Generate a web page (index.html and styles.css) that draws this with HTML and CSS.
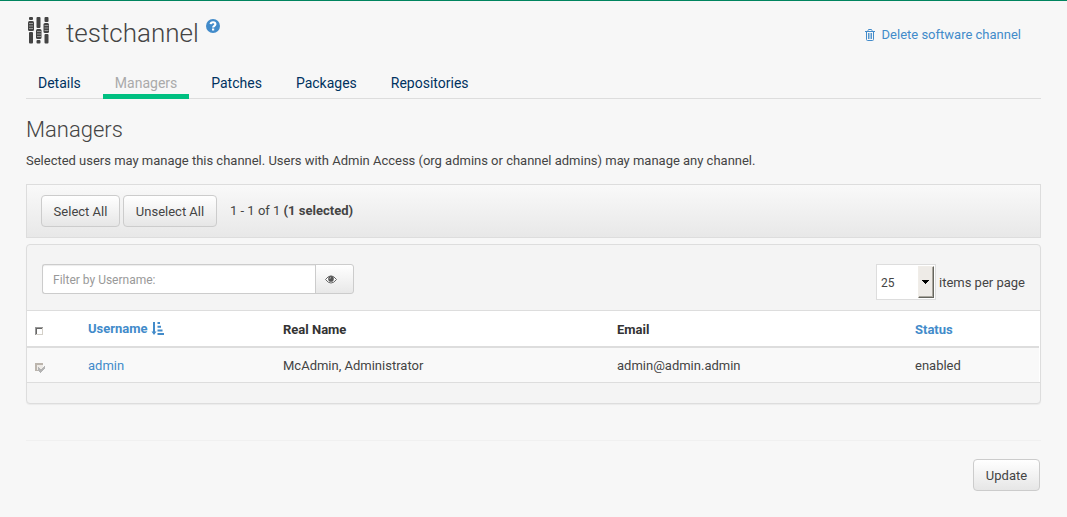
FILE: index.html
```html
<!DOCTYPE html>
<html lang="en">
<head>
<meta charset="utf-8">
<title>testchannel - Managers</title>
<link rel="stylesheet" href="styles.css">
</head>
<body>
<main class="page">
  <header class="page-header">
    <svg class="channel-icon" width="22" height="27" viewBox="0 0 22 27">
      <g fill="#444">
        <rect x="1" y="0" width="4" height="3" rx="1"/><rect x="0" y="4" width="6" height="10" rx="1.5"/><rect x="1" y="15" width="4" height="11.500" rx="1"/>
        <rect x="8.500" y="0" width="4" height="11" rx="1"/><rect x="8" y="12" width="5.500" height="10" rx="1.500"/><rect x="8.500" y="23" width="4" height="3.500" rx="1"/>
        <rect x="16.500" y="0" width="4" height="5" rx="1"/><rect x="15.500" y="6" width="5.500" height="10" rx="1.500"/><rect x="16.500" y="17" width="4" height="9.500" rx="1"/>
      </g>
      <path d="M1 6.500h4M1 9h4M1 11.500h4M9 14.500h4M9 17h4M9 19.500h4M16.500 8.500h4M16.500 11h4M16.500 13.500h4" stroke="#999" stroke-width="1"/>
    </svg>
    <h1 class="page-title">testchannel</h1>
    <svg class="help-icon" width="14" height="14" viewBox="0 0 14 14">
      <circle cx="7" cy="7" r="7" fill="#428bca"/>
      <path d="M4.600 5.200C4.800 2.600 9.400 2.600 9.400 5.200C9.400 6.900 7.100 6.700 7.100 8.600" fill="none" stroke="#fff" stroke-width="2.100"/>
      <rect x="6" y="9.500" width="2.200" height="2" fill="#fff"/>
    </svg>
    <a class="delete-link">
      <svg width="10" height="12" viewBox="0 0 10 12" fill="none" stroke="#428bca">
        <path d="M0 2.500h10M3 2.500V1.500L3.500.5h3L7 1.500v1M1.500 3v7.500q0 1 1 1h5q1 0 1-1V3"/>
        <path d="M3.500 4v6M5 4v6M6.500 4v6" stroke-width=".9"/>
      </svg>
      <span>Delete software channel</span>
    </a>
  </header>
  <nav class="tabs">
    <a class="tab">Details</a>
    <a class="tab active">Managers</a>
    <a class="tab">Patches</a>
    <a class="tab">Packages</a>
    <a class="tab">Repositories</a>
  </nav>
  <h2 class="section-title">Managers</h2>
  <p class="intro">Selected users may manage this channel. Users with Admin Access (org admins or channel admins) may manage any channel.</p>
  <div class="toolbar">
    <button class="btn select-all">Select All</button>
    <button class="btn unselect-all">Unselect All</button>
    <span class="count">1 - 1 of 1 <strong>(1 selected)</strong></span>
  </div>
  <section class="panel">
    <div class="panel-head">
      <div class="filter">
        <input class="filter-input" type="text" placeholder="Filter by Username:">
        <button class="filter-btn" aria-label="Filter">
          <svg width="12" height="9" viewBox="0 0 12 9">
            <path d="M.5 4.500Q6-2.800 11.500 4.500Q6 11.600.5 4.500Z" fill="#fff" stroke="#666"/>
            <circle cx="6" cy="3.900" r="2.800" fill="#555"/>
            <path d="M4.800 3.800q0-1.300 1.300-1.300" fill="none" stroke="#ddd" stroke-width=".7"/>
          </svg>
        </button>
      </div>
      <div class="page-size">
        <div class="select"><span class="select-value">25</span><span class="select-arrow"><svg width="7" height="4" viewBox="0 0 7 4" shape-rendering="crispEdges"><path d="M0 0h7v1H6v1H5v1H4v1H3V3H2V2H1V1H0z"/></svg></span></div>
        <span class="page-size-label">items per page</span>
      </div>
    </div>
    <table class="users">
      <colgroup><col class="col-check"><col class="col-user"><col class="col-name"><col class="col-email"><col class="col-status"></colgroup>
      <thead>
        <tr>
          <th><svg class="check" width="11" height="10" viewBox="0 0 11 10" shape-rendering="crispEdges"><rect width="8" height="8" fill="#d4d0c8"/><path d="M0 0h8v1H1v7H0z" fill="#999"/><path d="M1 1h6v1H2v5H1z" fill="#666"/><rect x="2" y="2" width="5" height="5" fill="#fff"/></svg></th>
          <th><span class="sort">Username<svg width="13" height="13" viewBox="0 0 13 13" fill="#428bca"><path d="M2 0h2v9.500h1.500L3 13 .5 9.500H2z"/><path d="M6.500 0h2.500v2H6.500zM6.500 3.700h3.500v2H6.500zM6.500 7.400H11.500v2H6.500zM6.500 11h6.500v2H6.500z"/></svg></span></th>
          <th>Real Name</th>
          <th>Email</th>
          <th class="sortable">Status</th>
        </tr>
      </thead>
      <tbody>
        <tr>
          <td><svg class="check" width="11" height="10" viewBox="0 0 11 10" shape-rendering="crispEdges"><rect width="8" height="8" fill="#eeebe7"/><path d="M0 0h8v2H2v6H0z" fill="#bcb5ad"/><path d="M0 7h4v1H0z" fill="#bcb5ad"/><path d="M3 4h1v1h1v1h2V5h1V4h1V3h1v3H9v1H8v1H7v1H6v1H5V9H4V8H3z" fill="#b4b4b4"/></svg></td>
          <td><a class="link">admin</a></td>
          <td>McAdmin, Administrator</td>
          <td>admin@admin.admin</td>
          <td>enabled</td>
        </tr>
      </tbody>
    </table>
    <div class="panel-foot"></div>
  </section>
  <footer class="actions"><button class="btn update">Update</button></footer>
</main>
</body>
</html>
```

FILE: styles.css
```css
* { box-sizing: border-box; }
body {
  margin: 0;
  height: 517px;
  overflow: hidden;
  background: #f7f7f7;
  border-top: 1px solid #00855f;
  color: #444;
  font: 13px/18px Roboto, "Liberation Sans", sans-serif;
}
.page { padding: 0 26px; }
.page-header { display: flex; align-items: flex-start; height: 71px; }
.channel-icon { margin: 16px 0 0 2px; }
.page-title { margin: 14px 0 0 16px; width: 133px; font-size: 26px; line-height: 37px; font-weight: 300; white-space: nowrap; }
.help-icon { margin: 18px 0 0 7px; }
.delete-link { display: flex; align-items: center; gap: 7px; margin: 25px 20px 0 auto; color: #428bca; }
.tabs { display: flex; height: 27px; border-bottom: 1px solid #ddd; font-size: 14px; line-height: 20px; color: #00325f; }
.tab { height: 27px; padding: 1px 12px 0; margin-right: 10px; white-space: nowrap; }
.tab.active { width: 86px; margin-right: 10.4px; color: #aaa; border-bottom: 5px solid #00c081; }
.section-title { margin: 17px 0 0; font-size: 22px; line-height: 28px; font-weight: 300; }
.intro { margin: 8px 0 14px; letter-spacing: -.01px; }
.toolbar {
  display: flex;
  height: 54px;
  padding: 10px 14px;
  border: 1px solid #ddd;
  background: linear-gradient(#f9f9f9, #e8e8e8);
}
.btn {
  height: 32px;
  padding: 1px 0 0;
  border: 1px solid #ccc;
  border-radius: 4px;
  background: linear-gradient(#fff, #e6e6e6);
  color: #444;
  font: 13px/18px Roboto, "Liberation Sans", sans-serif;
}
.select-all { width: 79px; margin-right: 3px; }
.unselect-all { width: 94px; }
.count { margin: 7px 0 0 13px; }
.panel {
  margin-top: 6px;
  border: 1px solid #ddd;
  border-radius: 4px;
  background: #f4f4f4;
  box-shadow: 0 1px 1px rgba(0, 0, 0, .05);
}
.panel-head { display: flex; justify-content: space-between; height: 66px; padding: 19px 15px 0; border-bottom: 1px solid #ddd; }
.filter { display: flex; height: 30px; }
.filter-input {
  width: 274px;
  padding: 1px 10px 0;
  border: 1px solid #ccc;
  border-right: 0;
  border-radius: 3px 0 0 3px;
  background: #fff;
  box-shadow: inset 0 1px 1px rgba(0, 0, 0, .075);
  font: 12px/18px Roboto, "Liberation Sans", sans-serif;
}
.filter-input::placeholder { color: #999; }
.filter-btn {
  display: flex;
  align-items: center;
  width: 39px;
  margin-left: -1px;
  padding: 1px 0 0 9px;
  border: 1px solid #ccc;
  border-radius: 0 3px 3px 0;
  background: linear-gradient(#fff, #e8e8e8);
}
.page-size { display: flex; }
.select { display: flex; justify-content: space-between; width: 60px; height: 36px; padding: 1px; border: 1px solid #ddd; background: #fff; }
.select-value { padding: 8px 0 0 3px; font-size: 12px; }
.select-arrow {
  display: flex;
  align-items: center;
  justify-content: center;
  width: 16px;
  border: 1px solid;
  border-color: #f0ede8 #65655e #65655e #f0ede8;
  background: #eeebe7;
  box-shadow: inset -1px -1px #aaa79f;
}
.page-size-label { margin: 10px 0 0 3px; }
.users { width: 1012px; table-layout: fixed; border-collapse: separate; border-spacing: 0; box-shadow: 1px 0 #fff; }
.col-check { width: 53px; }
.col-user { width: 195px; }
.col-name { width: 334px; }
.col-email { width: 298px; }
.users th { height: 37px; padding: 2px 8px 0; text-align: left; background: #fff; border-bottom: 2px solid #ddd; color: #333; }
.users td { height: 34px; padding: 1px 8px 0; background: #f9f9f9; }
.users .sortable, .sort, .link { color: #428bca; }
.sort { display: flex; align-items: center; gap: 3px; padding-bottom: 2px; }
.sort svg { margin-top: -1px; }
.check { display: block; margin-top: 4px; }
.panel-foot { height: 21px; border-top: 1px solid #ddd; }
.actions { display: flex; justify-content: flex-end; margin-top: 36px; padding: 18px 1px 0; border-top: 1px solid #f0f0f0; }
.update { width: 67px; }
```
